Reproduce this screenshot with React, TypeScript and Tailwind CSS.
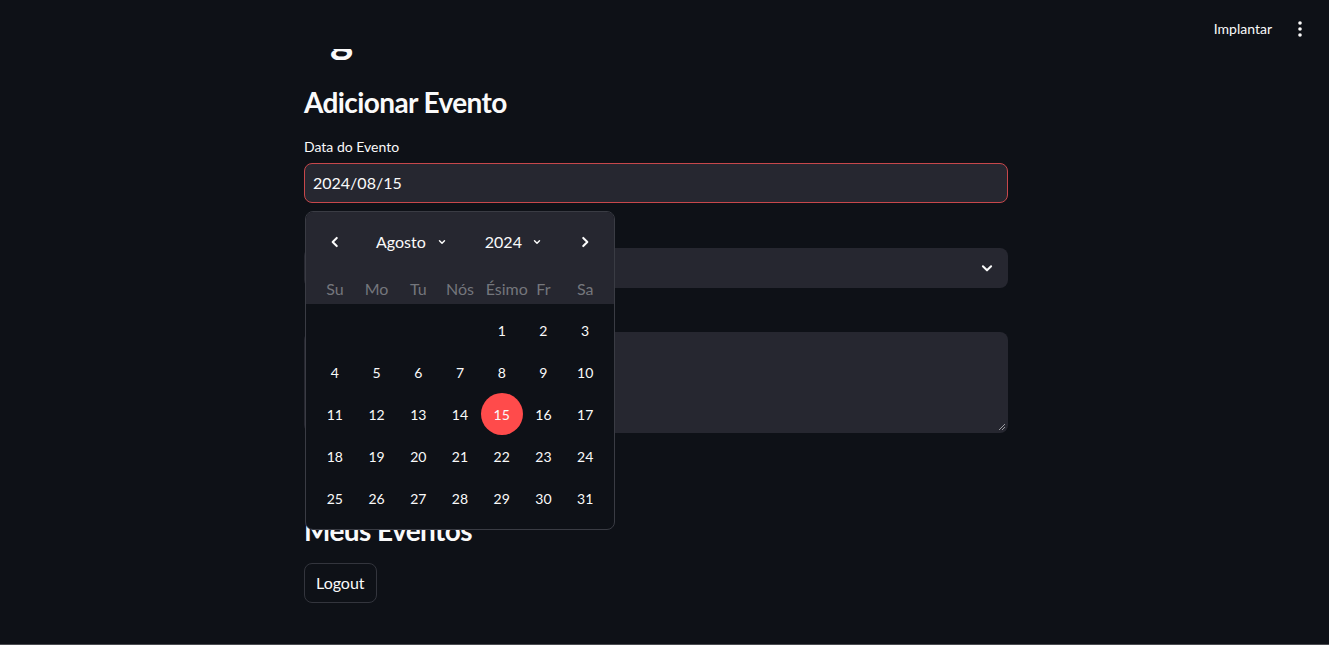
import React from "react";

const font = { fontFamily: '"Lato", "Liberation Sans", sans-serif' };

function ChevronLeft() {
  return (
    <svg width="14" height="14" viewBox="0 0 24 24" fill="none" stroke="#fafafa" strokeWidth="3.5" strokeLinecap="round" strokeLinejoin="round">
      <path d="M15 5l-7 7 7 7" />
    </svg>
  );
}
function ChevronRight() {
  return (
    <svg width="14" height="14" viewBox="0 0 24 24" fill="none" stroke="#fafafa" strokeWidth="3.5" strokeLinecap="round" strokeLinejoin="round">
      <path d="M9 5l7 7-7 7" />
    </svg>
  );
}
function SmallDown() {
  return (
    <svg width="10" height="10" viewBox="0 0 24 24" fill="none" stroke="#fafafa" strokeWidth="3.5" strokeLinecap="round" strokeLinejoin="round">
      <path d="M6 9l6 6 6-6" />
    </svg>
  );
}

export default function App() {
  const weeks: (number | null)[][] = [
    [null, null, null, null, 1, 2, 3],
    [4, 5, 6, 7, 8, 9, 10],
    [11, 12, 13, 14, 15, 16, 17],
    [18, 19, 20, 21, 22, 23, 24],
    [25, 26, 27, 28, 29, 30, 31],
  ];
  const wd = ["Su", "Mo", "Tu", "Nós", "Ésimo", "Fr", "Sa"];
  return (
    <div className="relative w-[1329px] h-[645px] overflow-hidden bg-[#0e1117] text-[#fafafa] border-b border-[#4a4b50]" style={font}>
      {/* top-right toolbar */}
      <div className="absolute top-0 right-0 h-[58px] flex items-center pr-[27px] gap-[26px] z-20">
        <span className="text-[14px] leading-none">Implantar</span>
        <svg width="4" height="16" viewBox="0 0 4 16" fill="#fafafa">
          <circle cx="2" cy="2" r="1.8" />
          <circle cx="2" cy="8" r="1.8" />
          <circle cx="2" cy="14" r="1.8" />
        </svg>
      </div>

      <div className="ml-[304px] w-[704px] flex flex-col">
        {/* scrolled-away title, only the descender of "g" is visible below the header */}
        <div className="h-[60px] overflow-hidden relative">
          <div className="absolute left-[26px] top-[14px] text-[44px] font-bold leading-none">g</div>
          <div className="absolute left-0 top-0 w-full h-[49px] bg-[#0e1117]" />
        </div>

        <h2 className="mt-[25px] text-[28px] font-bold leading-[34px] tracking-[-0.6px]">Adicionar Evento</h2>

        <label className="mt-[18px] text-[14px] leading-[20px]">Data do Evento</label>
        <div className="mt-[6px] h-[40px] rounded-[8px] border border-[#c7474b] bg-[#262730] flex items-center px-[8px] text-[16px]">
          2024/08/15
        </div>

        <div className="mt-[25px] h-[20px]" />
        <div className="h-[40px] rounded-[8px] bg-[#262730] flex items-center justify-end pr-[14px]">
          <svg width="14" height="14" viewBox="0 0 24 24" fill="none" stroke="#fafafa" strokeWidth="3.5" strokeLinecap="round" strokeLinejoin="round">
            <path d="M5 9l7 7 7-7" />
          </svg>
        </div>

        <div className="mt-[24px] h-[20px]" />
        <div className="h-[101px] rounded-[8px] bg-[#262730] relative">
          <svg className="absolute right-[2px] bottom-[2px]" width="8" height="8" viewBox="0 0 8 8" stroke="#9a9ba0" strokeWidth="1">
            <path d="M1 7L7 1M4 7L7 4" />
          </svg>
        </div>

        <div className="h-[80px]" />
        <h2 className="text-[28px] font-bold leading-[34px] tracking-[-0.6px]">Meus Eventos</h2>

        <button className="mt-[16px] self-start h-[40px] px-[11px] rounded-[8px] border border-[#33353d] bg-[#0e1117] text-[16px]">
          Logout
        </button>
      </div>

      {/* date picker popup */}
      <div className="absolute left-[305px] top-[211px] w-[310px] h-[319px] rounded-[8px] border border-[#3a3c44] bg-[#0e1117] overflow-hidden z-10">
        <div className="bg-[#262730] h-[92px] px-[8px] flex flex-col">
          <div className="h-[60px] flex items-center">
            <div className="w-[42px] flex justify-center"><ChevronLeft /></div>
            <div className="flex-1 flex items-center">
              <span className="ml-[20px] text-[16px]">Agosto</span>
              <span className="ml-[11px]"><SmallDown /></span>
              <span className="ml-[38px] text-[16px]">2024</span>
              <span className="ml-[10px]"><SmallDown /></span>
            </div>
            <div className="w-[42px] flex justify-center"><ChevronRight /></div>
          </div>
          <div className="mt-[8px] grid grid-cols-7 h-[24px] items-start">
            {wd.map((d) => (
              <div key={d} className={"flex justify-center text-[16px] leading-[18px] text-[#74767c] whitespace-nowrap " + (d === "Ésimo" ? "pl-[10px]" : "")}>
                {d}
              </div>
            ))}
          </div>
        </div>
        <div className="px-[8px] pt-[5px] flex flex-col">
          {weeks.map((w, i) => (
            <div key={i} className="grid grid-cols-7">
              {w.map((d, j) => (
                <div key={j} className="h-[42px] flex items-center justify-center">
                  {d !== null && (
                    <div className={"w-[42px] h-[42px] rounded-full flex items-center justify-center text-[14px] " + (d === 15 ? "bg-[#ff4b4b]" : "")}>
                      {d}
                    </div>
                  )}
                </div>
              ))}
            </div>
          ))}
        </div>
      </div>
    </div>
  );
}
